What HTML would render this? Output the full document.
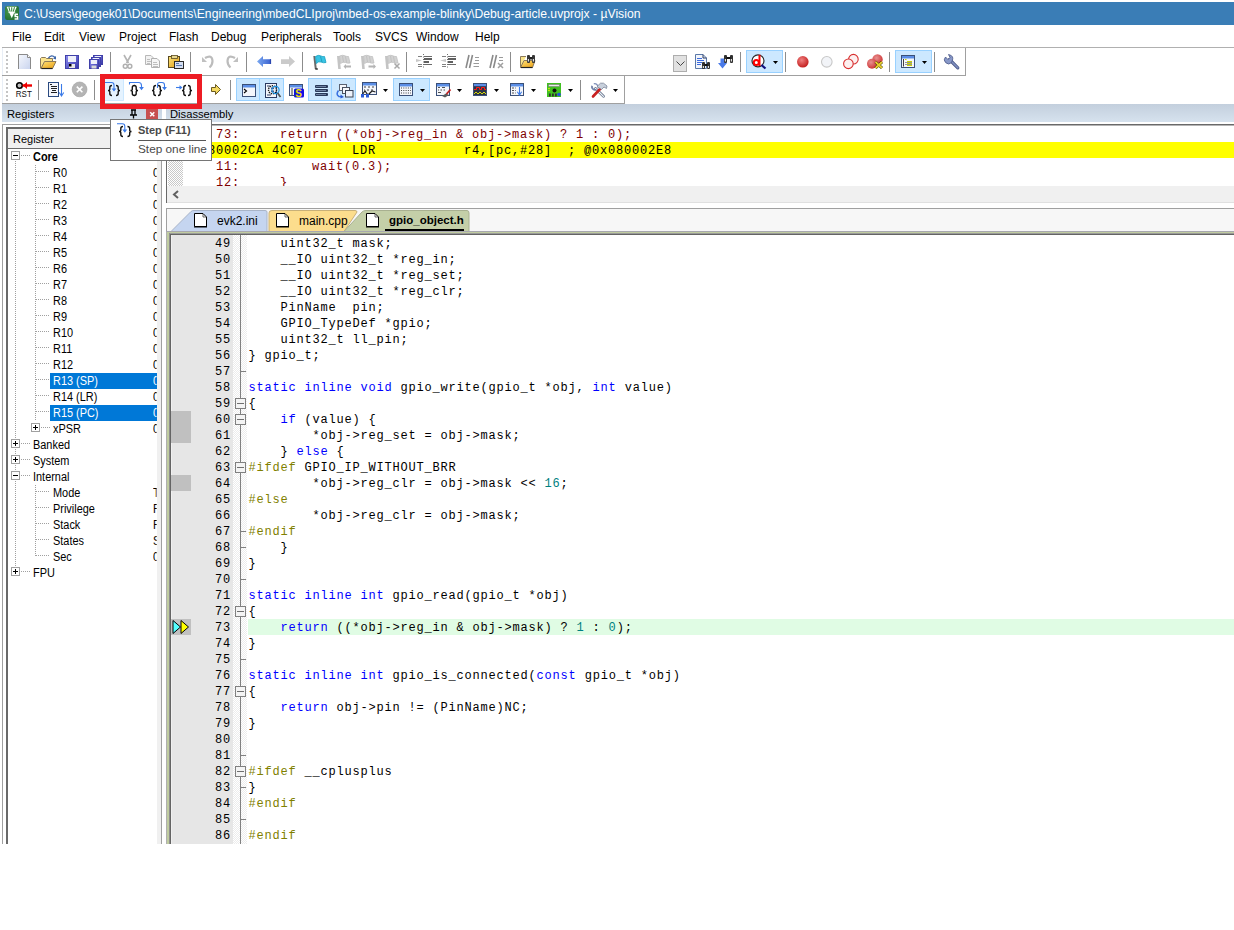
<!DOCTYPE html><html><head><meta charset="utf-8"><style>
*{margin:0;padding:0;box-sizing:border-box}
html,body{width:1234px;height:930px;overflow:hidden;background:#fff;font-family:"Liberation Sans",sans-serif;position:relative}
.a{position:absolute}
.t{position:absolute;white-space:pre;line-height:1}
.menu{top:31px;font-size:12px;color:#000}
.hl{position:absolute;background:#cce8ff;border:1px solid #99d1ff}
.sep{position:absolute;width:1px;background:#8c8c8c}
.dd{position:absolute;width:5px;height:3px;background:#000;clip-path:polygon(0 0,100% 0,50% 100%)}
.mono{font-family:"Liberation Mono",monospace;font-size:12px;letter-spacing:0.8px}
.code{position:absolute;white-space:pre;line-height:16px;height:16px;padding-top:1px}
.ln{position:absolute;left:170px;width:61px;text-align:right;white-space:pre;line-height:16px;height:16px;color:#000;padding-top:1px}
.kw{color:#0000ff}
.pp{color:#808000}
.nu{color:#008080}
.tree{font-size:12px;color:#000;line-height:16px;height:16px;transform:scaleX(0.91);transform-origin:0 0}
.dotv{position:absolute;width:1px;background-image:linear-gradient(#a0a0a0 50%,transparent 50%);background-size:1px 2px}
.doth{position:absolute;height:1px;background-image:linear-gradient(90deg,#a0a0a0 50%,transparent 50%);background-size:2px 1px}
.box{position:absolute;width:9px;height:9px;border:1px solid #a0a0a0;background:#fff}
.box:before{content:"";position:absolute;left:1px;top:3px;width:5px;height:1px;background:#000}
.box.p:after{content:"";position:absolute;left:3px;top:1px;width:1px;height:5px;background:#000}
.fbox{position:absolute;left:235px;width:11px;height:11px;border:1px solid #808080;background:#f4f4f4}
.fbox:before{content:"";position:absolute;left:1px;top:4px;width:7px;height:1px;background:#707070}
.ftick{position:absolute;left:240px;width:6px;height:1px;background:#808080}
</style></head><body>
<div class="a" style="left:2px;top:2px;width:1232px;height:23px;background:#3a7db6"></div>
<svg class="a" style="left:5px;top:6px" width="14" height="14" viewBox="0 0 14 14">
    <defs><radialGradient id="gg" cx="0.35" cy="0.35" r="0.8"><stop offset="0" stop-color="#4a9a50"/><stop offset="1" stop-color="#1e6a2a"/></radialGradient></defs>
    <rect x="0" y="0" width="14" height="14" rx="2.2" fill="url(#gg)"/>
    <path d="M1.6 0.8 H11.8 L6.8 12.2 Z" fill="#fff"/>
    <path d="M3.9 1.2 L5.2 5.8 M6.7 1.2 L6.7 5.8 M9.5 1.2 L8.2 5.8" stroke="#3a8a42" stroke-width="1.1"/>
    <path d="M3.4 6.2 H10.2" stroke="#fff" stroke-width="1"/>
    <path d="M13 8.2 H10.2 V10.6 H12.6 V13 H9.6" stroke="#fff" stroke-width="1.5" fill="none"/>
    </svg>
<div class="t" style="left:24px;top:8px;font-size:12.2px;color:#fff">C:\Users\geogek01\Documents\Engineering\mbedCLIproj\mbed-os-example-blinky\Debug-article.uvprojx - µVision</div>
<div class="t menu" style="left:12px">File</div>
<div class="t menu" style="left:44px">Edit</div>
<div class="t menu" style="left:79px">View</div>
<div class="t menu" style="left:119px">Project</div>
<div class="t menu" style="left:169px">Flash</div>
<div class="t menu" style="left:211px">Debug</div>
<div class="t menu" style="left:261px">Peripherals</div>
<div class="t menu" style="left:333px">Tools</div>
<div class="t menu" style="left:375px">SVCS</div>
<div class="t menu" style="left:416px">Window</div>
<div class="t menu" style="left:475px">Help</div>
<div class="a" style="left:2px;top:47px;width:1232px;height:1px;background:#b0b0b0"></div>
<div class="a" style="left:965px;top:48px;width:1px;height:28px;background:#a0a0a0"></div>
<div class="a" style="left:2px;top:75px;width:964px;height:1px;background:#a0a0a0"></div>
<div class="a" style="left:624px;top:76px;width:1px;height:27px;background:#a0a0a0"></div>
<div class="a" style="left:2px;top:103px;width:623px;height:1px;background:#a0a0a0"></div>
<div class="a" style="left:6px;top:51px;width:2px;height:2px;background:#c4c4c4"></div>
<div class="a" style="left:6px;top:55px;width:2px;height:2px;background:#c4c4c4"></div>
<div class="a" style="left:6px;top:59px;width:2px;height:2px;background:#c4c4c4"></div>
<div class="a" style="left:6px;top:63px;width:2px;height:2px;background:#c4c4c4"></div>
<div class="a" style="left:6px;top:67px;width:2px;height:2px;background:#c4c4c4"></div>
<div class="a" style="left:6px;top:71px;width:2px;height:2px;background:#c4c4c4"></div>
<div class="a" style="left:6px;top:79px;width:2px;height:2px;background:#c4c4c4"></div>
<div class="a" style="left:6px;top:83px;width:2px;height:2px;background:#c4c4c4"></div>
<div class="a" style="left:6px;top:87px;width:2px;height:2px;background:#c4c4c4"></div>
<div class="a" style="left:6px;top:91px;width:2px;height:2px;background:#c4c4c4"></div>
<div class="a" style="left:6px;top:95px;width:2px;height:2px;background:#c4c4c4"></div>
<div class="a" style="left:6px;top:99px;width:2px;height:2px;background:#c4c4c4"></div>
<div class="a" style="left:2px;top:48px;width:1px;height:27px;background:#e8eef6"></div>
<div class="a" style="left:2px;top:76px;width:1px;height:27px;background:#e8eef6"></div>
<div class="sep" style="left:110px;top:52px;height:20px"></div>
<div class="sep" style="left:190px;top:52px;height:20px"></div>
<div class="sep" style="left:246px;top:52px;height:20px"></div>
<div class="sep" style="left:302px;top:52px;height:20px"></div>
<div class="sep" style="left:406px;top:52px;height:20px"></div>
<div class="sep" style="left:510px;top:52px;height:20px"></div>
<div class="sep" style="left:740px;top:52px;height:20px"></div>
<div class="sep" style="left:785px;top:52px;height:20px"></div>
<div class="sep" style="left:889px;top:52px;height:20px"></div>
<div class="sep" style="left:934px;top:52px;height:20px"></div>
<div class="sep" style="left:38px;top:80px;height:20px"></div>
<div class="sep" style="left:94px;top:80px;height:20px"></div>
<div class="sep" style="left:230px;top:80px;height:20px"></div>
<div class="sep" style="left:580px;top:80px;height:20px"></div>
<div class="hl" style="left:746px;top:50px;width:37px;height:23px"></div>
<div class="hl" style="left:895px;top:50px;width:37px;height:23px"></div>
<div class="hl" style="left:236px;top:78px;width:24px;height:23px"></div>
<div class="hl" style="left:259px;top:78px;width:25px;height:23px"></div>
<div class="hl" style="left:308px;top:78px;width:24px;height:23px"></div>
<div class="hl" style="left:331px;top:78px;width:25px;height:23px"></div>
<div class="hl" style="left:393px;top:78px;width:37px;height:23px"></div>
<div class="dd" style="left:773px;top:61px"></div>
<div class="dd" style="left:922px;top:61px"></div>
<div class="dd" style="left:383px;top:89px"></div>
<div class="dd" style="left:420px;top:89px"></div>
<div class="dd" style="left:457px;top:89px"></div>
<div class="dd" style="left:494px;top:89px"></div>
<div class="dd" style="left:531px;top:89px"></div>
<div class="dd" style="left:568px;top:89px"></div>
<div class="dd" style="left:613px;top:89px"></div>
<div class="a" style="left:673px;top:55px;width:14px;height:17px;background:#e1e1e1;border:1px solid #adadad"></div>
<svg class="a" style="left:676px;top:61px" width="9" height="5"><path d="M0.5 0.5 L4.5 4.5 L8.5 0.5" stroke="#444" fill="none"/></svg>
<div class="a" style="left:2px;top:104px;width:1232px;height:18px;background:linear-gradient(#c3cfdd,#d6e2ee)"></div>
<div class="t" style="left:7px;top:109px;font-size:11.2px;color:#000">Registers</div>
<div class="a" style="left:146px;top:104px;width:12px;height:15px;background:#c75050"></div>
<svg class="a" style="left:149px;top:111px" width="7" height="7"><path d="M1.2 1.2 L5.3 5.3 M5.3 1.2 L1.2 5.3" stroke="#fff" stroke-width="1.5"/></svg>
<svg class="a" style="left:129px;top:109px" width="9" height="10"><path d="M2 1 H7 M3 1 V6 M6 1 V6 M1 6 H8 M4.5 6 V9.5" stroke="#000" stroke-width="1.3" fill="none"/></svg>
<div class="a" style="left:162px;top:104px;width:4px;height:18px;background:#fff"></div>
<div class="t" style="left:170px;top:109px;font-size:11.2px;color:#000">Disassembly</div>
<div class="a" style="left:2px;top:124px;width:160px;height:720px;border-left:1px solid #a0a0a0;border-top:1px solid #a0a0a0"></div>
<div class="a" style="left:6px;top:127px;width:151px;height:717px;border-left:2px solid #696969;border-top:2px solid #696969;background:#fff"></div>
<div class="a" style="left:157px;top:124px;width:5px;height:720px;background:#f0f0f0;border-right:1px solid #a0a0a0"></div>
<div class="a" style="left:8px;top:129px;width:149px;height:20px;background:#f0f0f0;border-bottom:1px solid #6a6a6a"></div>
<div class="t" style="left:13px;top:134px;font-size:11px;color:#000">Register</div>
<div class="dotv" style="left:15px;top:161px;height:408px"></div>
<div class="dotv" style="left:35px;top:165px;height:256px"></div>
<div class="dotv" style="left:35px;top:485px;height:72px"></div>
<div class="t tree" style="left:33px;top:149px;color:#000;font-weight:bold;">Core</div>
<div class="doth" style="left:21px;top:155px;width:9px"></div>
<div class="t tree" style="left:53px;top:165px;color:#000;">R0</div>
<div class="t tree" style="left:153px;top:165px;color:#000;width:4px;overflow:hidden">0</div>
<div class="doth" style="left:36px;top:171px;width:14px"></div>
<div class="t tree" style="left:53px;top:181px;color:#000;">R1</div>
<div class="t tree" style="left:153px;top:181px;color:#000;width:4px;overflow:hidden">0</div>
<div class="doth" style="left:36px;top:187px;width:14px"></div>
<div class="t tree" style="left:53px;top:197px;color:#000;">R2</div>
<div class="t tree" style="left:153px;top:197px;color:#000;width:4px;overflow:hidden">0</div>
<div class="doth" style="left:36px;top:203px;width:14px"></div>
<div class="t tree" style="left:53px;top:213px;color:#000;">R3</div>
<div class="t tree" style="left:153px;top:213px;color:#000;width:4px;overflow:hidden">0</div>
<div class="doth" style="left:36px;top:219px;width:14px"></div>
<div class="t tree" style="left:53px;top:229px;color:#000;">R4</div>
<div class="t tree" style="left:153px;top:229px;color:#000;width:4px;overflow:hidden">0</div>
<div class="doth" style="left:36px;top:235px;width:14px"></div>
<div class="t tree" style="left:53px;top:245px;color:#000;">R5</div>
<div class="t tree" style="left:153px;top:245px;color:#000;width:4px;overflow:hidden">0</div>
<div class="doth" style="left:36px;top:251px;width:14px"></div>
<div class="t tree" style="left:53px;top:261px;color:#000;">R6</div>
<div class="t tree" style="left:153px;top:261px;color:#000;width:4px;overflow:hidden">0</div>
<div class="doth" style="left:36px;top:267px;width:14px"></div>
<div class="t tree" style="left:53px;top:277px;color:#000;">R7</div>
<div class="t tree" style="left:153px;top:277px;color:#000;width:4px;overflow:hidden">0</div>
<div class="doth" style="left:36px;top:283px;width:14px"></div>
<div class="t tree" style="left:53px;top:293px;color:#000;">R8</div>
<div class="t tree" style="left:153px;top:293px;color:#000;width:4px;overflow:hidden">0</div>
<div class="doth" style="left:36px;top:299px;width:14px"></div>
<div class="t tree" style="left:53px;top:309px;color:#000;">R9</div>
<div class="t tree" style="left:153px;top:309px;color:#000;width:4px;overflow:hidden">0</div>
<div class="doth" style="left:36px;top:315px;width:14px"></div>
<div class="t tree" style="left:53px;top:325px;color:#000;">R10</div>
<div class="t tree" style="left:153px;top:325px;color:#000;width:4px;overflow:hidden">0</div>
<div class="doth" style="left:36px;top:331px;width:14px"></div>
<div class="t tree" style="left:53px;top:341px;color:#000;">R11</div>
<div class="t tree" style="left:153px;top:341px;color:#000;width:4px;overflow:hidden">0</div>
<div class="doth" style="left:36px;top:347px;width:14px"></div>
<div class="t tree" style="left:53px;top:357px;color:#000;">R12</div>
<div class="t tree" style="left:153px;top:357px;color:#000;width:4px;overflow:hidden">0</div>
<div class="doth" style="left:36px;top:363px;width:14px"></div>
<div class="a" style="left:50px;top:373px;width:107px;height:16px;background:#0078d7"></div>
<div class="t tree" style="left:53px;top:373px;color:#fff;">R13 (SP)</div>
<div class="t tree" style="left:153px;top:373px;color:#fff;width:4px;overflow:hidden">0</div>
<div class="doth" style="left:36px;top:379px;width:14px"></div>
<div class="t tree" style="left:53px;top:389px;color:#000;">R14 (LR)</div>
<div class="t tree" style="left:153px;top:389px;color:#000;width:4px;overflow:hidden">0</div>
<div class="doth" style="left:36px;top:395px;width:14px"></div>
<div class="a" style="left:50px;top:405px;width:107px;height:16px;background:#0078d7"></div>
<div class="t tree" style="left:53px;top:405px;color:#fff;">R15 (PC)</div>
<div class="t tree" style="left:153px;top:405px;color:#fff;width:4px;overflow:hidden">0</div>
<div class="doth" style="left:36px;top:411px;width:14px"></div>
<div class="t tree" style="left:53px;top:421px;color:#000;">xPSR</div>
<div class="t tree" style="left:153px;top:421px;color:#000;width:4px;overflow:hidden">0</div>
<div class="doth" style="left:41px;top:427px;width:9px"></div>
<div class="t tree" style="left:33px;top:437px;color:#000;">Banked</div>
<div class="doth" style="left:21px;top:443px;width:9px"></div>
<div class="t tree" style="left:33px;top:453px;color:#000;">System</div>
<div class="doth" style="left:21px;top:459px;width:9px"></div>
<div class="t tree" style="left:33px;top:469px;color:#000;">Internal</div>
<div class="doth" style="left:21px;top:475px;width:9px"></div>
<div class="t tree" style="left:53px;top:485px;color:#000;">Mode</div>
<div class="t tree" style="left:153px;top:485px;color:#000;width:4px;overflow:hidden">T</div>
<div class="doth" style="left:36px;top:491px;width:14px"></div>
<div class="t tree" style="left:53px;top:501px;color:#000;">Privilege</div>
<div class="t tree" style="left:153px;top:501px;color:#000;width:4px;overflow:hidden">F</div>
<div class="doth" style="left:36px;top:507px;width:14px"></div>
<div class="t tree" style="left:53px;top:517px;color:#000;">Stack</div>
<div class="t tree" style="left:153px;top:517px;color:#000;width:4px;overflow:hidden">F</div>
<div class="doth" style="left:36px;top:523px;width:14px"></div>
<div class="t tree" style="left:53px;top:533px;color:#000;">States</div>
<div class="t tree" style="left:153px;top:533px;color:#000;width:4px;overflow:hidden">S</div>
<div class="doth" style="left:36px;top:539px;width:14px"></div>
<div class="t tree" style="left:53px;top:549px;color:#000;">Sec</div>
<div class="t tree" style="left:153px;top:549px;color:#000;width:4px;overflow:hidden">0</div>
<div class="doth" style="left:36px;top:555px;width:14px"></div>
<div class="t tree" style="left:33px;top:565px;color:#000;">FPU</div>
<div class="doth" style="left:21px;top:571px;width:9px"></div>
<div class="box" style="left:11px;top:151px"></div>
<div class="box p" style="left:31px;top:423px"></div>
<div class="box p" style="left:11px;top:439px"></div>
<div class="box p" style="left:11px;top:455px"></div>
<div class="box" style="left:11px;top:471px"></div>
<div class="box p" style="left:11px;top:567px"></div>
<div class="a" style="left:166px;top:124px;width:1068px;height:79px;border-left:1px solid #696969;border-top:1px solid #696969;background:#fff"></div>
<div class="a" style="left:167px;top:125px;width:1067px;height:1px;background:#b4b4b4"></div>
<div class="a" style="left:168px;top:125px;width:15px;height:61px;background-color:#fff;background-image:repeating-conic-gradient(#c8c8c8 0 25%,#fff 0 50%);background-size:2px 2px"></div>
<div class="a" style="left:184px;top:142px;width:1050px;height:16px;background:#ffff00"></div>
<div class="a" style="left:184px;top:125px;width:1050px;height:61px;overflow:hidden">
<div class="code mono" style="left:0;top:1px;color:#800000">    73:     return ((*obj-&gt;reg_in &amp; obj-&gt;mask) ? 1 : 0);</div>
<div class="code mono" style="left:0;top:17px;color:#000">0x080002CA 4C07      LDR           r4,[pc,#28]  ; @0x080002E8</div>
<div class="code mono" style="left:0;top:33px;color:#800000">    11:         wait(0.3);</div>
<div class="code mono" style="left:0;top:49px;color:#800000">    12:     }</div>
</div>
<div class="a" style="left:167px;top:186px;width:1067px;height:17px;background:#f0f0f0;border-bottom:1px solid #e0e0e0"></div>
<svg class="a" style="left:172px;top:190px" width="8" height="9"><path d="M6 1 L2 4.5 L6 8" stroke="#606060" stroke-width="2" fill="none"/></svg>
<div class="a" style="left:166px;top:208px;width:1068px;height:1px;background:#a0a0a0"></div>
<div class="a" style="left:166px;top:209px;width:1068px;height:22px;background:#f7f7f7;border-left:1px solid #a0a0a0"></div>
<svg class="a" style="left:166px;top:209px" width="320" height="24">
    <path d="M5 22.5 L25 2.5 Q26 1.5 28 1.5 H99 Q101 1.5 101 3 V22.5 Z" fill="#c5d5f0" stroke="#a8b4c8"/>
    <path d="M103 22.5 V4 Q103 1.5 106 1.5 H189 Q191 1.5 191 3 L178 22.5 Z" fill="#fcdd8d" stroke="#c8b078"/>
    <path d="M178 22.5 L196 3 Q197.5 1.5 200 1.5 H301 Q303 1.5 303 4 V22.5 Z" fill="#c4cfa8" stroke="#a8b090"/>
    </svg>
<svg class="a" style="left:194px;top:213px" width="14" height="15"><path d="M0.5 0.5 H9 L12.5 4 V13.5 H0.5 Z" fill="#fff" stroke="#000" stroke-linejoin="miter"/><path d="M0 14 H13 M12.5 4 V14" stroke="#000" stroke-width="1"/><path d="M9 1 V4 H12" fill="none" stroke="#404040" stroke-width="0.8"/></svg>
<svg class="a" style="left:276px;top:213px" width="14" height="15"><path d="M0.5 0.5 H9 L12.5 4 V13.5 H0.5 Z" fill="#fff" stroke="#000" stroke-linejoin="miter"/><path d="M0 14 H13 M12.5 4 V14" stroke="#000" stroke-width="1"/><path d="M9 1 V4 H12" fill="none" stroke="#404040" stroke-width="0.8"/></svg>
<svg class="a" style="left:366px;top:213px" width="14" height="15"><path d="M0.5 0.5 H9 L12.5 4 V13.5 H0.5 Z" fill="#fff" stroke="#000" stroke-linejoin="miter"/><path d="M0 14 H13 M12.5 4 V14" stroke="#000" stroke-width="1"/><path d="M9 1 V4 H12" fill="none" stroke="#404040" stroke-width="0.8"/></svg>
<div class="t" style="left:217px;top:215px;font-size:12px;color:#000">evk2.ini</div>
<div class="t" style="left:299px;top:215px;font-size:12px;color:#000">main.cpp</div>
<div class="t" style="left:389px;top:215px;font-size:12px;color:#000;font-weight:bold;font-size:11.5px">gpio_object.h</div>
<div class="a" style="left:385px;top:229px;width:79px;height:2px;background:#000"></div>
<div class="a" style="left:166px;top:231px;width:1068px;height:613px;background:#fff"></div>
<div class="a" style="left:166px;top:231px;width:1068px;height:1px;background:#a8a8b0"></div>
<div class="a" style="left:166px;top:232px;width:1068px;height:1px;background:#c0cca0"></div>
<div class="a" style="left:166px;top:233px;width:1068px;height:1px;background:#9a9a9a"></div>
<div class="a" style="left:166px;top:234px;width:1068px;height:1px;background:#646464"></div>
<div class="a" style="left:166px;top:232px;width:1px;height:612px;background:#b0b0b0"></div>
<div class="a" style="left:167px;top:232px;width:2px;height:612px;background:#c0cca0"></div>
<div class="a" style="left:169px;top:233px;width:1px;height:611px;background:#909090"></div>
<div class="a" style="left:170px;top:234px;width:1px;height:610px;background:#646464"></div>
<div class="a" style="left:171px;top:235px;width:1px;height:609px;background:#f0f0f0"></div>
<div class="a" style="left:172px;top:235px;width:61px;height:609px;background:#e6e6e6"></div>
<div class="a" style="left:233px;top:235px;width:14px;height:609px;background-color:#fff;background-image:repeating-conic-gradient(#ececec 0 25%,#fff 0 50%);background-size:2px 2px"></div>
<div class="a" style="left:248px;top:619px;width:986px;height:16px;background:#e0fce4"></div>
<div class="a" style="left:171px;top:411px;width:20px;height:32px;background:#c0c0c0"></div>
<div class="a" style="left:171px;top:475px;width:20px;height:16px;background:#c0c0c0"></div>
<div class="a" style="left:171px;top:619px;width:20px;height:16px;background:#c0c0c0"></div>
<svg class="a" style="left:171px;top:619px" width="20" height="16"><path d="M2 1.5 L9.5 8 L2 14.5 Z" fill="#55ffff" stroke="#000"/><path d="M10 1.5 L17.5 8 L10 14.5 Z" fill="#ffff00" stroke="#000"/></svg>
<div class="a" style="left:240px;top:235px;width:1px;height:609px;background:#808080"></div>
<div class="fbox" style="top:398px"></div>
<div class="fbox" style="top:414px"></div>
<div class="fbox" style="top:462px"></div>
<div class="fbox" style="top:606px"></div>
<div class="fbox" style="top:686px"></div>
<div class="fbox" style="top:766px"></div>
<div class="ftick" style="top:371px"></div>
<div class="ftick" style="top:531px"></div>
<div class="ftick" style="top:547px"></div>
<div class="ftick" style="top:579px"></div>
<div class="ftick" style="top:659px"></div>
<div class="ftick" style="top:755px"></div>
<div class="ftick" style="top:787px"></div>
<div class="ftick" style="top:819px"></div>
<div class="a mono" style="left:0;top:0">
<div class="ln mono" style="top:235px">49</div>
<div class="code mono" style="left:248.5px;top:235px">    uint32_t mask;</div>
<div class="ln mono" style="top:251px">50</div>
<div class="code mono" style="left:248.5px;top:251px">    __IO uint32_t *reg_in;</div>
<div class="ln mono" style="top:267px">51</div>
<div class="code mono" style="left:248.5px;top:267px">    __IO uint32_t *reg_set;</div>
<div class="ln mono" style="top:283px">52</div>
<div class="code mono" style="left:248.5px;top:283px">    __IO uint32_t *reg_clr;</div>
<div class="ln mono" style="top:299px">53</div>
<div class="code mono" style="left:248.5px;top:299px">    PinName  pin;</div>
<div class="ln mono" style="top:315px">54</div>
<div class="code mono" style="left:248.5px;top:315px">    GPIO_TypeDef *gpio;</div>
<div class="ln mono" style="top:331px">55</div>
<div class="code mono" style="left:248.5px;top:331px">    uint32_t ll_pin;</div>
<div class="ln mono" style="top:347px">56</div>
<div class="code mono" style="left:248.5px;top:347px">} gpio_t;</div>
<div class="ln mono" style="top:363px">57</div>
<div class="ln mono" style="top:379px">58</div>
<div class="code mono" style="left:248.5px;top:379px"><span class="kw">static</span> <span class="kw">inline</span> <span class="kw">void</span> gpio_write(gpio_t *obj, <span class="kw">int</span> value)</div>
<div class="ln mono" style="top:395px">59</div>
<div class="code mono" style="left:248.5px;top:395px">{</div>
<div class="ln mono" style="top:411px">60</div>
<div class="code mono" style="left:248.5px;top:411px">    <span class="kw">if</span> (value) {</div>
<div class="ln mono" style="top:427px">61</div>
<div class="code mono" style="left:248.5px;top:427px">        *obj-&gt;reg_set = obj-&gt;mask;</div>
<div class="ln mono" style="top:443px">62</div>
<div class="code mono" style="left:248.5px;top:443px">    } <span class="kw">else</span> {</div>
<div class="ln mono" style="top:459px">63</div>
<div class="code mono" style="left:248.5px;top:459px"><span class="pp">#ifdef</span> GPIO_IP_WITHOUT_BRR</div>
<div class="ln mono" style="top:475px">64</div>
<div class="code mono" style="left:248.5px;top:475px">        *obj-&gt;reg_clr = obj-&gt;mask &lt;&lt; <span class="nu">16</span>;</div>
<div class="ln mono" style="top:491px">65</div>
<div class="code mono" style="left:248.5px;top:491px"><span class="pp">#else</span></div>
<div class="ln mono" style="top:507px">66</div>
<div class="code mono" style="left:248.5px;top:507px">        *obj-&gt;reg_clr = obj-&gt;mask;</div>
<div class="ln mono" style="top:523px">67</div>
<div class="code mono" style="left:248.5px;top:523px"><span class="pp">#endif</span></div>
<div class="ln mono" style="top:539px">68</div>
<div class="code mono" style="left:248.5px;top:539px">    }</div>
<div class="ln mono" style="top:555px">69</div>
<div class="code mono" style="left:248.5px;top:555px">}</div>
<div class="ln mono" style="top:571px">70</div>
<div class="ln mono" style="top:587px">71</div>
<div class="code mono" style="left:248.5px;top:587px"><span class="kw">static</span> <span class="kw">inline</span> <span class="kw">int</span> gpio_read(gpio_t *obj)</div>
<div class="ln mono" style="top:603px">72</div>
<div class="code mono" style="left:248.5px;top:603px">{</div>
<div class="ln mono" style="top:619px">73</div>
<div class="code mono" style="left:248.5px;top:619px">    <span class="kw">return</span> ((*obj-&gt;reg_in &amp; obj-&gt;mask) ? <span class="nu">1</span> : <span class="nu">0</span>);</div>
<div class="ln mono" style="top:635px">74</div>
<div class="code mono" style="left:248.5px;top:635px">}</div>
<div class="ln mono" style="top:651px">75</div>
<div class="ln mono" style="top:667px">76</div>
<div class="code mono" style="left:248.5px;top:667px"><span class="kw">static</span> <span class="kw">inline</span> <span class="kw">int</span> gpio_is_connected(<span class="kw">const</span> gpio_t *obj)</div>
<div class="ln mono" style="top:683px">77</div>
<div class="code mono" style="left:248.5px;top:683px">{</div>
<div class="ln mono" style="top:699px">78</div>
<div class="code mono" style="left:248.5px;top:699px">    <span class="kw">return</span> obj-&gt;pin != (PinName)NC;</div>
<div class="ln mono" style="top:715px">79</div>
<div class="code mono" style="left:248.5px;top:715px">}</div>
<div class="ln mono" style="top:731px">80</div>
<div class="ln mono" style="top:747px">81</div>
<div class="ln mono" style="top:763px">82</div>
<div class="code mono" style="left:248.5px;top:763px"><span class="pp">#ifdef</span> __cplusplus</div>
<div class="ln mono" style="top:779px">83</div>
<div class="code mono" style="left:248.5px;top:779px">}</div>
<div class="ln mono" style="top:795px">84</div>
<div class="code mono" style="left:248.5px;top:795px"><span class="pp">#endif</span></div>
<div class="ln mono" style="top:811px">85</div>
<div class="ln mono" style="top:827px">86</div>
<div class="code mono" style="left:248.5px;top:827px"><span class="pp">#endif</span></div>
</div>
<svg class="a" style="left:0;top:0" width="1234" height="104" viewBox="0 0 1234 104">
<defs>
<linearGradient id="gdoc" x1="0" y1="0" x2="1" y2="1"><stop offset="0" stop-color="#f6f8fd"/><stop offset="1" stop-color="#c9d4ee"/></linearGradient>
<linearGradient id="gfold" x1="0" y1="0" x2="1" y2="1"><stop offset="0" stop-color="#fde27a"/><stop offset="1" stop-color="#eb9e10"/></linearGradient>
<linearGradient id="gfloppy" x1="0" y1="0" x2="1" y2="1"><stop offset="0" stop-color="#8c8cf0"/><stop offset="1" stop-color="#3636a8"/></linearGradient>
<radialGradient id="gred" cx="0.4" cy="0.35" r="0.7"><stop offset="0" stop-color="#f08080"/><stop offset="1" stop-color="#c01818"/></radialGradient>
<radialGradient id="gredk" cx="0.4" cy="0.35" r="0.7"><stop offset="0" stop-color="#e89090"/><stop offset="1" stop-color="#cc3030"/></radialGradient>
<linearGradient id="gblue" x1="0" y1="0" x2="1" y2="0"><stop offset="0" stop-color="#7aa8f0"/><stop offset="1" stop-color="#3a62d0"/></linearGradient>
</defs>
<path d="M18.5 69 V54.5 H27.5 L30.5 57.5 V69" fill="url(#gdoc)" stroke="#8a8a8a"/><path d="M27.5 54.5 V57.5 H30.5" fill="#fff" stroke="#8a8a8a"/>
<path d="M40.5 68.5 V58.5 L41.5 57.5 H45.5 L46.5 58.5 H52.5 V61.5" fill="#fbe48c" stroke="#8c7a5a"/>
<path d="M41 68.5 L44.5 61.5 H56 L52.5 68.5 Z" fill="url(#gfold)" stroke="#8c7a5a"/><path d="M41.5 68.5 H52.5" stroke="#202020" stroke-width="1.2"/>
<path d="M48.5 58 Q51.5 54 55 57.5" fill="none" stroke="#3a64a8" stroke-width="1.3"/><path d="M53 58.5 L56 56 L56 59.5 Z" fill="#3a64a8"/>
<rect x="65.5" y="55.5" width="13" height="13" fill="url(#gfloppy)" stroke="#4040a8"/><rect x="68" y="56" width="8" height="6" fill="#eef0fa"/><rect x="69" y="64" width="6" height="4" fill="#e8e8e8"/><rect x="69" y="64" width="2.5" height="2.5" fill="#000"/>
<rect x="93.5" y="55.5" width="9" height="9" fill="url(#gfloppy)" stroke="#4040a8"/><rect x="95" y="56" width="6" height="3" fill="#eef0fa"/>
<rect x="91.5" y="57.5" width="9" height="9" fill="url(#gfloppy)" stroke="#4040a8"/><rect x="93" y="58" width="6" height="3" fill="#eef0fa"/>
<rect x="89.5" y="59.5" width="9" height="9" fill="url(#gfloppy)" stroke="#4040a8"/><rect x="91" y="60" width="6" height="4" fill="#eef0fa"/>
<rect x="91.5" y="65.5" width="5" height="3" fill="#d8d8d8"/>
<path d="M124 55 L128.5 63 M131 55 L126.5 63" stroke="#b4b4b4" stroke-width="1.6"/><circle cx="125.3" cy="66.3" r="2" fill="none" stroke="#b0b0b0" stroke-width="1.5"/><circle cx="129.8" cy="66.3" r="2" fill="none" stroke="#b0b0b0" stroke-width="1.5"/>
<path d="M145.5 64.5 V55.5 H151 L153.5 58 V64.5 Z" fill="#f2f2f2" stroke="#b8b8b8"/><path d="M151.5 67.5 V58.5 H157 L159.5 61 V67.5 Z" fill="#f6f6f6" stroke="#b0b0b0"/><path d="M147 59.5 H150 M147 61.5 H151 M147 63.5 H150 M153 62.5 H157 M153 64.5 H158 M153 66.5 H158" stroke="#b8b8b8" stroke-width="0.9"/>
<defs><linearGradient id="gpaste" x1="0" y1="0" x2="1" y2="1"><stop offset="0" stop-color="#fce680"/><stop offset="1" stop-color="#e09a10"/></linearGradient></defs><rect x="168.5" y="56.5" width="11" height="11" fill="url(#gpaste)" stroke="#5a4a20"/><rect x="171.5" y="55.5" width="6" height="3" fill="#e8d890" stroke="#5a4a20" stroke-width="0.8"/><rect x="174.5" y="61.5" width="9" height="7" fill="#d4def2" stroke="#2a2a2a"/><path d="M176 63.5 H179 M176 65.5 H182" stroke="#4a6aa0" stroke-width="0.9"/>
<path d="M205 58 Q212 54 212.5 61 Q212.5 65 209.5 67.5" fill="none" stroke="#bcbcbc" stroke-width="2.2"/><path d="M202 57 L207 62 L202 62 Z" fill="#c0c0c0"/>
<path d="M235 58 Q228 54 227.5 61 Q227.5 65 230.5 67.5" fill="none" stroke="#bcbcbc" stroke-width="2.2"/><path d="M238 57 L233 62 L238 62 Z" fill="#c0c0c0"/>
<path d="M257 61.5 L263 56 V59.2 H271 V64 H263 V67 Z" fill="url(#gblue)"/><path d="M270.5 59.2 V64" stroke="#2a46b0" stroke-width="1.2"/>
<path d="M295 61.5 L289 56 V59.2 H281 V64 H289 V67 Z" fill="#cacaca"/>
<path d="M314.3 56 L315.8 69" stroke="#6a6a6a" stroke-width="2"/><path d="M315.3 69 H317.8" stroke="#303030" stroke-width="1.5"/>
<path d="M315.5 56.5 Q318.5 54.5 321 56 Q323 57 324.5 56.5 L326 62.5 Q323.5 63.3 321 62 Q318.5 61 316.3 63.5 Z" fill="#38c4e4" stroke="#18a0c0" stroke-width="0.8"/><path d="M320.5 56.5 L322 62" stroke="#1890b0" stroke-width="0.7"/>
<path d="M338.3 56 L339.5 69" stroke="#c4c4c4" stroke-width="2.6"/>
<path d="M339.5 56 Q343 54.5 345.5 56 Q347 56.8 348.5 56.5 L350 63 Q347.5 63.5 345.5 62.5 Q343 61.5 340.5 63.5 Z" fill="#d2d2d2" stroke="#c0c0c0" stroke-width="0.8"/><path d="M342.5 56 L343.5 62 M345.5 56.3 L346.5 62.5" stroke="#bcbcbc" stroke-width="0.8"/>
<path d="M343.5 66.5 L346 64 V65.5 H351 V67.5 H346 V69 Z" fill="#b4b4b4"/>
<path d="M362.3 56 L363.5 69" stroke="#c4c4c4" stroke-width="2.6"/>
<path d="M363.5 56 Q367 54.5 369.5 56 Q371 56.8 372.5 56.5 L374 63 Q371.5 63.5 369.5 62.5 Q367 61.5 364.5 63.5 Z" fill="#d2d2d2" stroke="#c0c0c0" stroke-width="0.8"/><path d="M366.5 56 L367.5 62 M369.5 56.3 L370.5 62.5" stroke="#bcbcbc" stroke-width="0.8"/>
<path d="M376 66.5 L373.5 64 V65.5 H368.5 V67.5 H373.5 V69 Z" fill="#b4b4b4"/>
<path d="M386.3 56 L387.5 69" stroke="#c4c4c4" stroke-width="2.6"/>
<path d="M387.5 56 Q391 54.5 393.5 56 Q395 56.8 396.5 56.5 L398 63 Q395.5 63.5 393.5 62.5 Q391 61.5 388.5 63.5 Z" fill="#d2d2d2" stroke="#c0c0c0" stroke-width="0.8"/><path d="M390.5 56 L391.5 62 M393.5 56.3 L394.5 62.5" stroke="#bcbcbc" stroke-width="0.8"/>
<path d="M394.5 63.5 L399.5 68.5 M399.5 63.5 L394.5 68.5" stroke="#a8a8a8" stroke-width="1.5"/>
<path d="M418 56.5 H422 M418 64.5 H422 M418 66.5 H422" stroke="#808080"/>
<path d="M423.5 54 V69" stroke="#707070" stroke-dasharray="1 1.5"/>
<path d="M424 56.5 H432 M424 64.5 H432" stroke="#6a6a6a"/><rect x="424" y="58" width="8" height="2" fill="#606060"/><rect x="424" y="61" width="5" height="2" fill="#606060"/>
<path d="M416 59 L422 60.5 L416 62 Z" fill="#c8c8c8"/>
<path d="M442 56.5 H446 M442 64.5 H446 M442 66.5 H446" stroke="#808080"/>
<path d="M447.5 54 V69" stroke="#707070" stroke-dasharray="1 1.5"/>
<path d="M448 56.5 H456 M448 64.5 H456" stroke="#6a6a6a"/><rect x="448" y="58" width="8" height="2" fill="#606060"/><rect x="448" y="61" width="5" height="2" fill="#606060"/>
<path d="M446 59 L440 60.5 L446 62 Z" fill="#c8c8c8"/>
<path d="M466 68 L469 55 M469.5 68 L472.5 55" stroke="#8a8a8a" stroke-width="1.6"/>
<path d="M475 57.5 H479 M475 60.5 H479 M473.5 63.5 H479 M473.5 66.5 H479" stroke="#9a9a9a"/>
<path d="M490 68 L493 55 M493.5 68 L496.5 55" stroke="#8a8a8a" stroke-width="1.6"/>
<path d="M499 57.5 H503 M499 60.5 H503" stroke="#9a9a9a"/><path d="M498 63 L503 68 M503 63 L498 68" stroke="#a0a0a0" stroke-width="1.5"/>
<path d="M520.5 67.5 V56.5 H526" fill="#fae58a" stroke="#8c7a5a"/><path d="M520.5 67.5 L524 60.5 H535 L532.5 67.5 Z" fill="url(#gfold)" stroke="#8c7a5a"/><path d="M521 67.5 H532.5" stroke="#202020" stroke-width="1.2"/>
<rect x="527" y="55" width="3" height="8" rx="1" fill="#383838"/><rect x="532" y="55" width="3" height="8" rx="1" fill="#383838"/><rect x="529.5" y="57" width="3" height="2.5" fill="#202020"/><rect x="527.8" y="59" width="1.2" height="2.5" fill="#e0e0e0"/><rect x="532.8" y="59" width="1.2" height="2.5" fill="#e0e0e0"/>
<path d="M695.5 68.5 V54.5 H703 L706.5 58 V68.5 Z" fill="#f2f5fb" stroke="#5a78a8"/><path d="M703 54.5 V58 H706.5" fill="none" stroke="#2a3a60"/><path d="M697 58.5 H702 M697 60.5 H704 M697 62.5 H702 M697 64.5 H701" stroke="#3a6ae0"/>
<rect x="702" y="62" width="3" height="7" rx="1" fill="#303030"/><rect x="707" y="62" width="3" height="7" rx="1" fill="#303030"/><rect x="704.5" y="64" width="3" height="2" fill="#101010"/><rect x="702.8" y="66" width="1.2" height="2" fill="#e0e0e0"/><rect x="707.8" y="66" width="1.2" height="2" fill="#e0e0e0"/>
<path d="M720.5 58.5 H724.5 V63 H727 L722.5 68.5 L718 63 H720.5 Z" fill="#4a7ae8"/>
<rect x="724" y="55" width="3" height="8" rx="1" fill="#303030"/><rect x="730" y="55" width="3" height="8" rx="1" fill="#303030"/><rect x="726.5" y="57" width="4" height="2" fill="#101010"/><rect x="724.8" y="59" width="1.2" height="2.5" fill="#e0e0e0"/><rect x="730.8" y="59" width="1.2" height="2.5" fill="#e0e0e0"/>
<circle cx="758" cy="60.8" r="6" fill="#fff" stroke="#2a2a2a" stroke-width="1.2"/><path d="M761.5 65 L765.5 68.5" stroke="#101080" stroke-width="2.2"/>
<path d="M759.5 54.8 V66" stroke="#ff0000" stroke-width="2"/><circle cx="756.3" cy="62.5" r="2.5" fill="none" stroke="#ff0000" stroke-width="2"/>
<circle cx="802.8" cy="61.8" r="5.8" fill="url(#gred)"/>
<circle cx="826.8" cy="61.8" r="5.3" fill="#f2f4f8" stroke="#c8c8c8" stroke-width="1.1"/>
<circle cx="853.4" cy="59.2" r="4.8" fill="#fdf0f0" stroke="#d83030" stroke-width="1.1"/><circle cx="848.4" cy="63.8" r="4.8" fill="#fdf0f0" stroke="#d83030" stroke-width="1.1"/>
<circle cx="877.5" cy="59.5" r="5.2" fill="url(#gredk)"/><circle cx="872" cy="63.8" r="5" fill="url(#gredk)"/><path d="M875.5 62 L882 68 M882 62 L875.5 68" stroke="#3a3000" stroke-width="3"/><path d="M875.5 62 L882 68 M882 62 L875.5 68" stroke="#e8d030" stroke-width="1.8"/>
<rect x="901.5" y="55.5" width="13" height="12" fill="#f4f6fb" stroke="#3b5078"/>
<rect x="902" y="56" width="12" height="2.5" fill="#5b8ee6"/>
<path d="M902 58.5 H914" stroke="#a8c4f0" stroke-width="1"/><path d="M903.5 59 V66.5" stroke="#404040"/><path d="M905 59.5 H906.5 M907 61.5 H912 M907 63.5 H912 M907 65.5 H912" stroke="#c8d400" stroke-width="1"/><path d="M905 62.5 H912 M905 64.5 H912" stroke="#505050" stroke-width="0.6"/>
<path d="M949.5 59.5 L957.8 67.8" stroke="#4a5888" stroke-width="3.2" stroke-linecap="round"/><path d="M949.5 59.5 L957.8 67.8" stroke="#8090c0" stroke-width="1.6" stroke-linecap="round"/>
<path d="M945.5 57 A4 4 0 0 0 951.5 62.5 L952.5 60 A4 4 0 0 0 950 55 L948.5 54.5 L950 57.5 L948 59.5 Z" fill="#8898c8" stroke="#4a5888" stroke-width="0.8"/>
<circle cx="19.5" cy="85.5" r="2.8" fill="#c0c0c0" stroke="#000" stroke-width="1.6"/><path d="M22.5 85.5 H32" stroke="#f00000" stroke-width="2.4"/><path d="M23 85.5 L27 82 V89 Z" fill="#f00000"/>
<text x="15.8" y="97" font-family="Liberation Sans" font-size="9.8" fill="#111" textLength="16" lengthAdjust="spacingAndGlyphs">RST</text>
<rect x="48.5" y="82.5" width="10" height="14" fill="#f4f6fb" stroke="#2a4a80"/><path d="M50 84.5 H52 M51 86.5 H57 M51 88.5 H57 M52 90.5 H56 M51 92.5 H57" stroke="#202020" stroke-width="1"/>
<path d="M61.5 84 V95" stroke="#3a7ae8" stroke-width="1.1"/><path d="M59.3 92.5 L61.5 96 L63.7 92.5" fill="none" stroke="#3a7ae8" stroke-width="1.1"/>
<circle cx="79.6" cy="89.4" r="7.4" fill="#b4b4b4" stroke="#a0a0a0" stroke-width="0.6"/><path d="M76.8 86.6 L82.4 92.2 M82.4 86.6 L76.8 92.2" stroke="#fff" stroke-width="1.6"/>
<rect x="105" y="79" width="19" height="22" fill="#e5f3ff"/><path d="M105 100.5 H123.5 V79" fill="none" stroke="#cce8ff"/>
<path d="M112 85.5 Q109.8 85.5 109.8 87.5 V89.5 Q109.8 90.5 108 90.5 Q109.8 90.5 109.8 91.5 V93.5 Q109.8 95.5 112 95.5" fill="none" stroke="#111" stroke-width="1.4"/><path d="M116 85.5 Q118.2 85.5 118.2 87.5 V89.5 Q118.2 90.5 120 90.5 Q118.2 90.5 118.2 91.5 V93.5 Q118.2 95.5 116 95.5" fill="none" stroke="#111" stroke-width="1.4"/>
<path d="M105 82.5 H111.5 Q114 82.5 114 85 V90" fill="none" stroke="#3a7ae8" stroke-width="1.1"/><path d="M111.6 88.5 L114 91.5 L116.4 88.5 Z" fill="#3a7ae8"/>
<path d="M134.5 85.5 Q132.3 85.5 132.3 87.5 V89.5 Q132.3 90.5 130.5 90.5 Q132.3 90.5 132.3 91.5 V93.5 Q132.3 95.5 134.5 95.5" fill="none" stroke="#111" stroke-width="1.4"/><path d="M134 85.5 Q136.2 85.5 136.2 87.5 V89.5 Q136.2 90.5 138 90.5 Q136.2 90.5 136.2 91.5 V93.5 Q136.2 95.5 134 95.5" fill="none" stroke="#111" stroke-width="1.4"/>
<path d="M129.5 84.5 V82.5 H138.5 Q141.5 82.5 141.5 85.5 V88" fill="none" stroke="#3a7ae8" stroke-width="1.1"/><path d="M139.1 87 L141.5 90.2 L143.9 87 Z" fill="#3a7ae8"/>
<path d="M156 85.5 Q153.8 85.5 153.8 87.5 V89.5 Q153.8 90.5 152 90.5 Q153.8 90.5 153.8 91.5 V93.5 Q153.8 95.5 156 95.5" fill="none" stroke="#111" stroke-width="1.4"/><path d="M158 85.5 Q160.2 85.5 160.2 87.5 V89.5 Q160.2 90.5 162 90.5 Q160.2 90.5 160.2 91.5 V93.5 Q160.2 95.5 158 95.5" fill="none" stroke="#111" stroke-width="1.4"/>
<path d="M157.5 88 V84.5 Q157.5 82.5 160 82.5 H162 Q164.5 82.5 164.5 85 V88" fill="none" stroke="#3a7ae8" stroke-width="1.1"/><path d="M162.1 87 L164.5 90.2 L166.9 87 Z" fill="#3a7ae8"/>
<path d="M186 85.5 Q183.8 85.5 183.8 87.5 V89.5 Q183.8 90.5 182 90.5 Q183.8 90.5 183.8 91.5 V93.5 Q183.8 95.5 186 95.5" fill="none" stroke="#111" stroke-width="1.4"/><path d="M188 85.5 Q190.2 85.5 190.2 87.5 V89.5 Q190.2 90.5 192 90.5 Q190.2 90.5 190.2 91.5 V93.5 Q190.2 95.5 188 95.5" fill="none" stroke="#111" stroke-width="1.4"/>
<path d="M176 87.5 H181" stroke="#3a7ae8" stroke-width="1.1"/><path d="M179.5 85.2 L182.5 87.5 L179.5 89.8 Z" fill="#3a7ae8"/>
<path d="M211.5 87.5 H215.5 V84.5 L220.5 89.5 L215.5 94.5 V91.5 H211.5 Z" fill="#f4d860" stroke="#6a5a20" stroke-width="1"/>
<rect x="242.5" y="84.5" width="13" height="12" fill="#f4f6fb" stroke="#3b5078"/>
<rect x="243" y="85" width="12" height="2.5" fill="#5b8ee6"/>
<path d="M243 87.5 H255" stroke="#a8c4f0" stroke-width="1"/><path d="M244 89 L246.5 91 L244 93" fill="none" stroke="#000" stroke-width="1.1"/>
<rect x="265.5" y="83.5" width="11" height="14" fill="#f4f6fb" stroke="#2a3a60"/><path d="M267 86 H270 M267 95 H271" stroke="#2a3a60"/>
<circle cx="272.5" cy="89.8" r="4" fill="#e8eef8" stroke="#141414" stroke-width="1.4" stroke-dasharray="1.3 0.9"/><rect x="271" y="87.5" width="3" height="1.6" fill="#4a5a80"/><rect x="271" y="90.5" width="3" height="1.6" fill="#4a5a80"/><circle cx="275.5" cy="90" r="3.6" fill="none" stroke="#1890e0" stroke-width="1.1"/><path d="M277.6 93 L280.5 97" stroke="#505050" stroke-width="1.7"/>
<rect x="289.5" y="84.5" width="13" height="11" fill="#f4f6fb" stroke="#3b5078"/>
<rect x="290" y="85" width="12" height="2.5" fill="#5b8ee6"/>
<path d="M290 87.5 H302" stroke="#a8c4f0" stroke-width="1"/><path d="M292 88 V95" stroke="#404040"/>
<rect x="294" y="88.5" width="10" height="9" rx="1.5" fill="#1010e0"/><text x="295.3" y="96.5" font-family="Liberation Sans" font-weight="bold" font-size="10" fill="#f0e000">S</text>
<rect x="315" y="85" width="13" height="3" rx="1" fill="#2a3a5a"/><path d="M316.5 86.5 H326.5" stroke="#b0c8e8" stroke-dasharray="1 1"/>
<rect x="315" y="89" width="13" height="3" rx="1" fill="#2a3a5a"/><path d="M316.5 90.5 H326.5" stroke="#b0c8e8" stroke-dasharray="1 1"/>
<rect x="315" y="93" width="13" height="3" rx="1" fill="#2a3a5a"/><path d="M316.5 94.5 H326.5" stroke="#b0c8e8" stroke-dasharray="1 1"/>
<rect x="339.5" y="84.5" width="7" height="6" fill="#f6f8fc" stroke="#5a6272" stroke-width="1"/><rect x="342.5" y="87.5" width="7" height="6" fill="#f6f8fc" stroke="#4a5262"/><rect x="345.5" y="90.5" width="7.5" height="6.5" fill="#eef2fa" stroke="#3a4252"/>
<path d="M338.5 90.5 Q335.5 94.5 339 96.5 L342 96.8" fill="none" stroke="#3a72e0" stroke-width="1.6"/><path d="M340.5 94.5 L344 97 L340.5 98.5 Z" fill="#2a5ad0"/>
<rect x="362.5" y="82.5" width="14" height="12" fill="#f4f6fb" stroke="#3b5078"/>
<rect x="363" y="83" width="13" height="2.5" fill="#5b8ee6"/>
<path d="M363 85.5 H376" stroke="#a8c4f0" stroke-width="1"/><path d="M364 87 H366 M368 87 H370 M372 87 H374 M364 90 H365 M367 90 H369 M371 90 H373" stroke="#404040"/>
<path d="M361.5 95.5 L365 91 L368 95 L372 91 L375.5 92" fill="none" stroke="#202020" stroke-width="1.2"/><rect x="361" y="94" width="3" height="3.5" fill="#2a5ad8"/><rect x="366" y="94" width="3" height="3.5" fill="#2a5ad8"/>
<rect x="399.5" y="83.5" width="13" height="12" fill="#f4f6fb" stroke="#3b5078"/>
<rect x="400" y="84" width="12" height="2.5" fill="#5b8ee6"/>
<path d="M400 86.5 H412" stroke="#a8c4f0" stroke-width="1"/><path d="M401 88 H411 M401 90.5 H411 M401 93 H411" stroke="#404040" stroke-dasharray="1 1.3"/>
<rect x="436.5" y="83.5" width="13" height="12" fill="#f4f6fb" stroke="#3b5078"/>
<rect x="437" y="84" width="12" height="2.5" fill="#5b8ee6"/>
<path d="M437 86.5 H449" stroke="#a8c4f0" stroke-width="1"/><path d="M438 87.5 H440 M442 87.5 H445 M438 90 H439 M440.5 90 H442 M443.5 90 H445 M438 92.5 H441" stroke="#505050"/>
<path d="M442 96 L446 93.5 L449 95 L445 97.5 Z" fill="#5a5a5a"/><path d="M446.5 94 L450.5 89.5" stroke="#c02020" stroke-width="1.8"/>
<rect x="473.5" y="83.5" width="13" height="12" fill="#2c3444" stroke="#3b5078"/><rect x="474" y="84" width="12" height="2.2" fill="#5b8ee6"/>
<path d="M474 89.5 H476.5 V87.5 H479.5 V89.5 H481.5 V87.5 H484.5 V89.5 H486" fill="none" stroke="#ff1818" stroke-width="1" stroke-linejoin="miter"/><path d="M474 94 L476 92 L478 94 L480 92 L482 94 L484 92 L486 94" fill="none" stroke="#f0f000" stroke-width="0.9"/>
<rect x="510.5" y="83.5" width="13" height="12" fill="#f4f6fb" stroke="#3b5078"/>
<rect x="511" y="84" width="12" height="2.5" fill="#5b8ee6"/>
<path d="M511 86.5 H523" stroke="#a8c4f0" stroke-width="1"/><path d="M512 88 H514 M512 90.5 H514 M512 93 H514" stroke="#505050"/><path d="M515 88 H516 M515 90.5 H516 M515 93 H516" stroke="#808080"/><path d="M519.5 87 V94" stroke="#3a7ae8" stroke-width="1.1"/><path d="M517.3 91.8 L519.5 95 L521.7 91.8" fill="none" stroke="#3a7ae8" stroke-width="1.1"/>
<rect x="547" y="83" width="14" height="14" fill="#40c020"/><rect x="548.5" y="84.5" width="11" height="2" fill="#e8e8e8" stroke="#707070" stroke-width="0.5"/><circle cx="554.5" cy="90.5" r="2" fill="#101010"/><rect x="549" y="93.5" width="1.8" height="3" fill="#303030"/><rect x="552" y="93.5" width="1.8" height="3" fill="#303030"/><rect x="555" y="93.5" width="1.8" height="3" fill="#303030"/><circle cx="559" cy="94.5" r="1.8" fill="#2050e0"/><circle cx="549" cy="88.5" r="0.8" fill="#f0f000"/><circle cx="549" cy="90.5" r="0.8" fill="#f0f000"/>
<path d="M595.5 88.5 L603.5 96.3" stroke="#6a7890" stroke-width="2.8" stroke-linecap="round"/><path d="M595.5 88.5 L603.5 96.3" stroke="#f0f4fa" stroke-width="1.1" stroke-linecap="round"/>
<path d="M592 85.8 A3.2 3.2 0 0 0 596.5 89.5" fill="none" stroke="#7080a8" stroke-width="1.8"/><path d="M593.8 83.8 A3.2 3.2 0 0 1 597.8 87.5" fill="none" stroke="#8090b8" stroke-width="1.4"/>
<path d="M600.5 88.5 L593 96.5" stroke="#c82020" stroke-width="2.6" stroke-linecap="round"/>
<path d="M597 86.5 L600.5 83.2 H603.5 L607 86 L606.5 88.5 L604 87 L601.5 89.5 Z" fill="#c8d0dc" stroke="#7a8498" stroke-width="0.8"/>
</svg>
<div class="a" style="left:100px;top:74px;width:102px;height:35px;border:5px solid #ed1c24"></div>
<div class="a" style="left:110px;top:119px;width:102px;height:42px;background:#fff;border:1px solid #767676"></div>
<div class="t" style="left:138px;top:125px;font-size:11px;font-weight:bold;color:#4a4a4a">Step (F11)</div>
<div class="a" style="left:138px;top:140px;width:68px;height:1px;background:#575757"></div>
<svg class="a" style="left:110px;top:119px" width="30" height="22" viewBox="110 119 30 22"><path d="M123 126.5 Q120.8 126.5 120.8 128.5 V130.5 Q120.8 131.5 119 131.5 Q120.8 131.5 120.8 132.5 V134.5 Q120.8 136.5 123 136.5" fill="none" stroke="#111" stroke-width="1.4"/><path d="M127.5 126.5 Q129.7 126.5 129.7 128.5 V130.5 Q129.7 131.5 131.5 131.5 Q129.7 131.5 129.7 132.5 V134.5 Q129.7 136.5 127.5 136.5" fill="none" stroke="#111" stroke-width="1.4"/><path d="M117 123.8 H122.5 Q124.8 123.8 124.8 126.3 V131" fill="none" stroke="#3a7ae8" stroke-width="1.1"/><path d="M122.4 129.5 L124.8 132.7 L127.2 129.5 Z" fill="#3a7ae8"/></svg>
<div class="t" style="left:138px;top:144px;font-size:11.8px;color:#4a4a4a">Step one line</div>
</body></html>
